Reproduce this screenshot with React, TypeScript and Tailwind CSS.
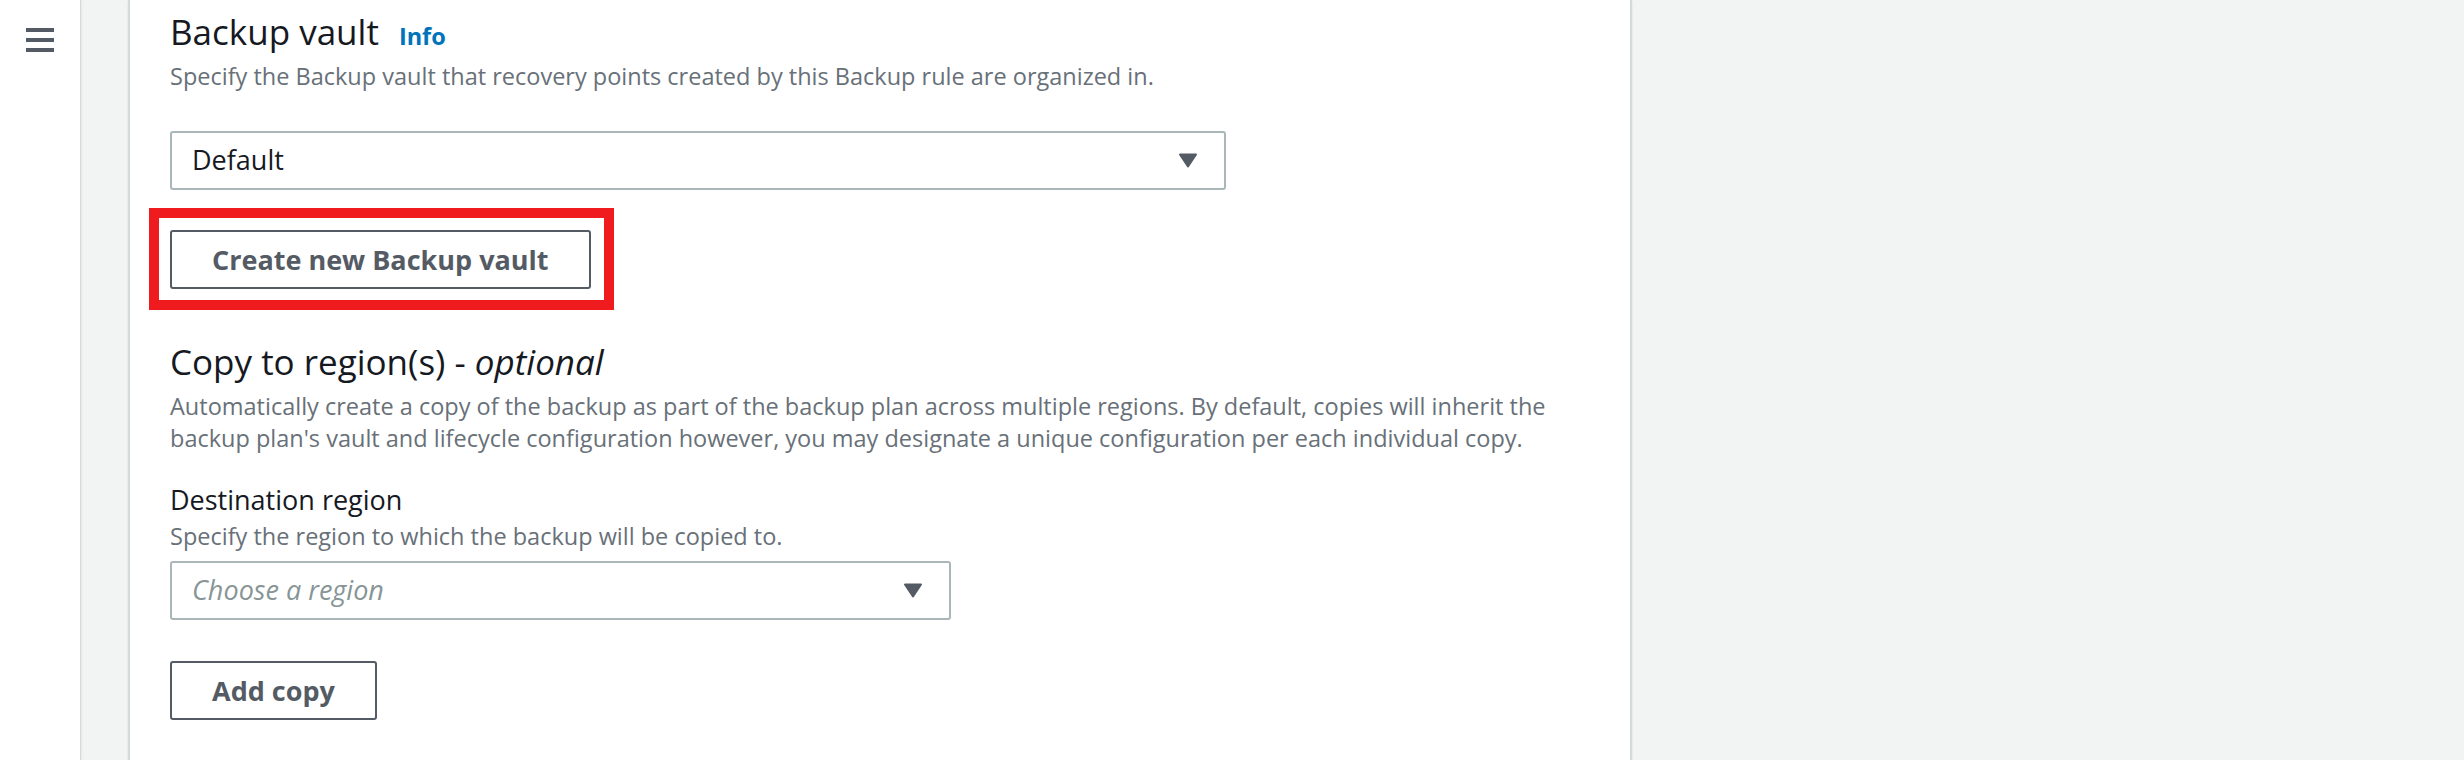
import React from 'react'

function Caret() {
  return (
    <svg width="20" height="15" viewBox="0 0 20 15" className="shrink-0">
      <path d="M2 1.5 H18 L10 13.5 Z" fill="#545b64" stroke="#545b64" strokeWidth="2" strokeLinejoin="round" />
    </svg>
  )
}

function Select({ value, placeholder, width }: { value?: string; placeholder?: string; width: string }) {
  return (
    <div className={`${width} h-[59px] flex items-center justify-between border-2 border-[#aab7b8] rounded-[3px] pl-[20px] pr-[26px] bg-white`}>
      {value
        ? <span className="text-[27px] text-[#16191f]">{value}</span>
        : <span className="text-[27px] italic text-[#879596]">{placeholder}</span>}
      <Caret />
    </div>
  )
}

function Button({ children }: { children: React.ReactNode }) {
  return (
    <button className="h-[59px] px-[40px] border-2 border-[#545b64] rounded-[3px] bg-white text-[27px] leading-[36px] font-bold text-[#545b64]">
      {children}
    </button>
  )
}

export default function App() {
  return (
    <div className="flex h-[760px] w-[2464px] overflow-hidden bg-[#f2f3f3] font-[family-name:'Open_Sans',sans-serif]">
      {/* Side nav toggle */}
      <aside className="w-[81px] shrink-0 bg-white border-r border-[#d5dbdb] shadow-[1px_0_2px_rgba(0,0,0,0.06)] pt-[28px] pl-[26px]">
        <div className="flex flex-col gap-[6px]">
          <span className="block h-[4px] w-[28px] bg-[#545b64]" />
          <span className="block h-[4px] w-[28px] bg-[#545b64]" />
          <span className="block h-[4px] w-[28px] bg-[#545b64]" />
        </div>
      </aside>

      <main className="pl-[47px] h-full">
        <section className="w-[1504px] h-full bg-white border-x-2 border-[#d5dbdb] shadow-[0_1px_2px_rgba(0,0,0,0.1)] pl-[40px] pt-[12px]">
          {/* Backup vault */}
          <div className="flex h-[40px] items-baseline gap-[20px]">
            <h2 className="text-[35px] leading-[40px] text-[#16191f]">Backup vault</h2>
            <a className="text-[23.5px] leading-[32px] font-bold text-[#0073bb]">Info</a>
          </div>
          <p className="mt-[8px] text-[23.5px] leading-[32px] text-[#687078]">
            Specify the Backup vault that recovery points created by this Backup rule are organized in.
          </p>
          <div className="mt-[39px]">
            <Select value="Default" width="w-[1056px]" />
          </div>
          <div className="mt-[40px] relative w-fit">
            <Button>Create new Backup vault</Button>
            <div className="absolute -left-[21px] -top-[22px] -right-[23px] -bottom-[21px] border-[10px] border-[#f01b1f] pointer-events-none" />
          </div>

          {/* Copy to region */}
          <h2 className="mt-[53px] text-[35px] leading-[40px] text-[#16191f]">
            Copy to region(s) - <span className="italic">optional</span>
          </h2>
          <p className="mt-[8px] w-[1440px] text-[23.5px] leading-[32px] text-[#687078]">
            Automatically create a copy of the backup as part of the backup plan across multiple regions. By default, copies will inherit the
            <br />
            backup plan's vault and lifecycle configuration however, you may designate a unique configuration per each individual copy.
          </p>
          <div className="mt-[30px] text-[27px] leading-[32px] text-[#16191f]">Destination region</div>
          <div className="mt-[4px] text-[23.5px] leading-[32px] text-[#687078]">Specify the region to which the backup will be copied to.</div>
          <div className="mt-[9px]">
            <Select placeholder="Choose a region" width="w-[781px]" />
          </div>
          <div className="mt-[41px]">
            <Button>Add copy</Button>
          </div>
        </section>
      </main>
    </div>
  )
}
